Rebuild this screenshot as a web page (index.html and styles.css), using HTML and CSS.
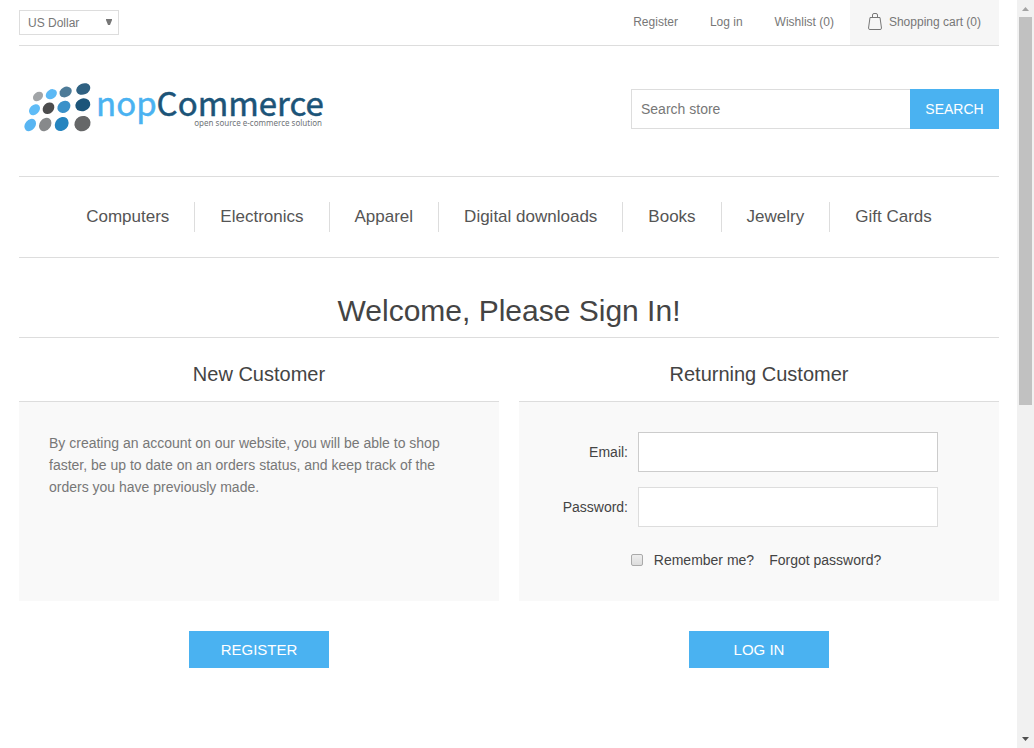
FILE: index.html
```html
<!DOCTYPE html>
<html lang="en">
<head>
<meta charset="utf-8">
<meta name="viewport" content="width=device-width, initial-scale=1">
<title>nopCommerce - Login</title>
<link rel="stylesheet" href="styles.css">
</head>
<body>
<div class="page">
  <header>
    <div class="header-upper">
      <div class="currency">
        <select class="currency-select" aria-label="Currency"><option>US Dollar</option><option>Euro</option></select>
        <svg class="currency-arrow" width="6" height="6" viewBox="0 0 6 6" aria-hidden="true"><path d="M0 0H6V1L4 6H2L0 1Z" fill="#777"/></svg>
      </div>
      <nav class="header-links" aria-label="Account">
        <a href="#">Register</a>
        <a href="#">Log in</a>
        <a href="#">Wishlist (0)</a>
        <a href="#" class="cart-link">
          <svg width="14" height="17" viewBox="0 0 14 17" fill="none" stroke="#777" aria-hidden="true"><path d="M2 4.500H12L13.500 15.200Q13.500 16.500 12 16.500H2Q.5 16.500.5 15.200Z"/><path d="M4.500 4V2Q4.500.5 6 .5H8Q9.500.5 9.500 2V4"/></svg>
          <span>Shopping cart (0)</span>
        </a>
      </nav>
    </div>
    <div class="header-lower">
      <a href="#" class="logo" aria-label="nopCommerce, open source e-commerce solution">
        <svg width="310" height="60" viewBox="0 0 310 60">
          <g transform="translate(-19 -78)">
            <ellipse cx="38" cy="96.500" rx="5.500" ry="4.200" transform="rotate(-38 38 96.500)" fill="#a1a4a7"/>
            <ellipse cx="51.300" cy="94.200" rx="6" ry="4.600" transform="rotate(-34 51.300 94.200)" fill="#5cb9f5"/>
            <ellipse cx="65.600" cy="92" rx="6.500" ry="5" transform="rotate(-30 65.600 92)" fill="#4d7b98"/>
            <ellipse cx="83.300" cy="89" rx="7.300" ry="5.500" transform="rotate(-24 83.300 89)" fill="#2f6182"/>
            <ellipse cx="34.500" cy="109.700" rx="6.200" ry="4.700" transform="rotate(-44 34.500 109.700)" fill="#5fbcf7"/>
            <ellipse cx="48.500" cy="108.300" rx="6.400" ry="5.200" transform="rotate(-44 48.500 108.300)" fill="#4c4c4d"/>
            <ellipse cx="63.900" cy="106.800" rx="6.900" ry="5.700" transform="rotate(-36 63.900 106.800)" fill="#3a91c9"/>
            <ellipse cx="82.800" cy="104.800" rx="7.600" ry="6.300" transform="rotate(-20 82.800 104.800)" fill="#1c557a"/>
            <ellipse cx="30.200" cy="125" rx="6.800" ry="5.100" transform="rotate(-50 30.200 125)" fill="#58b5f2"/>
            <ellipse cx="45.200" cy="124.500" rx="7.200" ry="5.600" transform="rotate(-52 45.200 124.500)" fill="#87898b"/>
            <ellipse cx="61.700" cy="124" rx="7.600" ry="6.400" transform="rotate(-48 61.700 124)" fill="#2584bf"/>
            <ellipse cx="82.500" cy="123.600" rx="8.300" ry="7.500" transform="rotate(-30 82.500 123.600)" fill="#666768"/>
          </g>
          <text class="logo-name" x="77" y="38"><tspan class="logo-nop">nop</tspan><tspan class="logo-commerce">Commerce</tspan></text>
          <text class="logo-tagline" x="303" y="48" text-anchor="end">open source e-commerce solution</text>
        </svg>
      </a>
      <form class="search">
        <input class="search-input" type="text" placeholder="Search store" aria-label="Search store">
        <button class="search-button" type="button">SEARCH</button>
      </form>
    </div>
    <nav class="menu" aria-label="Categories">
      <a href="#">Computers</a>
      <a href="#">Electronics</a>
      <a href="#">Apparel</a>
      <a href="#">Digital downloads</a>
      <a href="#">Books</a>
      <a href="#">Jewelry</a>
      <a href="#">Gift Cards</a>
    </nav>
  </header>
  <main>
    <h1>Welcome, Please Sign In!</h1>
    <div class="columns">
      <section class="column">
        <h2>New Customer</h2>
        <div class="panel">
          <p>By creating an account on our website, you will be able to shop faster, be up to date on an orders status, and keep track of the orders you have previously made.</p>
        </div>
        <button class="action" type="button">REGISTER</button>
      </section>
      <section class="column">
        <h2>Returning Customer</h2>
        <form class="panel" id="login">
          <div class="field">
            <label for="email">Email:</label>
            <input class="email" type="email" id="email">
          </div>
          <div class="field">
            <label for="password">Password:</label>
            <input type="password" id="password">
          </div>
          <div class="options">
            <input type="checkbox" id="remember">
            <label for="remember">Remember me?</label>
            <a href="#">Forgot password?</a>
          </div>
        </form>
        <button class="action" type="button">LOG IN</button>
      </section>
    </div>
  </main>
</div>
<div class="scrollbar" aria-hidden="true">
  <svg width="17" height="17" viewBox="0 0 17 17"><path d="M5 11H12L8.500 7Z" fill="#a3a3a3"/></svg>
  <div class="track"><div class="thumb"></div></div>
  <svg width="17" height="17" viewBox="0 0 17 17"><path d="M5 6H12L8.500 10Z" fill="#505050"/></svg>
</div>
</body>
</html>
```
FILE: styles.css
```css
* { box-sizing: border-box; }
body {
  margin: 0;
  display: flex;
  min-height: 100vh;
  font: 14px "Liberation Sans", Arial, sans-serif;
  color: #777;
  background: #fff;
}
a { color: inherit; text-decoration: none; }
button, input, select { font: inherit; border-radius: 0; }
.page { flex: 1; min-width: 0; padding: 0 18px 0 19px; }

.header-upper {
  display: flex;
  justify-content: space-between;
  align-items: center;
  border-bottom: 1px solid #ddd;
  font-size: 12px;
}
.currency { position: relative; }
.currency-select {
  appearance: none;
  display: block;
  width: 100px;
  height: 25px;
  padding: 0 8px;
  border: 1px solid #ddd;
  background: #fff;
  color: #777;
}
.currency-arrow { position: absolute; right: 7px; top: 9px; pointer-events: none; }
.header-links { display: flex; line-height: 45px; }
.header-links a { padding: 0 16px; }
.header-links .cart-link {
  display: flex;
  align-items: center;
  gap: 7px;
  padding: 0 18px;
  background: #f6f6f6;
}
.cart-link span { height: 45px; }
.cart-link svg { margin-bottom: 2px; }

.header-lower {
  display: flex;
  justify-content: space-between;
  align-items: center;
  padding: 32px 0 38px;
  border-bottom: 1px solid #ddd;
}
.logo svg { display: block; overflow: visible; }
.logo-name { font-family: "Noto Sans CJK SC", sans-serif; font-size: 33px; stroke-width: 0.5px; }
.logo-nop { fill: #4ab2f1; stroke: #4ab2f1; }
.logo-commerce { fill: #1c5478; stroke: #1c5478; }
.logo-tagline { font-family: "Noto Sans", sans-serif; font-size: 8px; fill: #6f7478; }
.search { display: flex; height: 40px; margin-top: 2px; }
.search-input {
  width: 279px;
  padding: 0 9px;
  border: 1px solid #ddd;
  border-right: 0;
  color: #777;
}
.search-input::placeholder { color: #777; opacity: 1; }
.search-button { width: 89px; padding: 0; border: 0; background: #4ab2f1; color: #fff; }

.menu {
  display: flex;
  justify-content: center;
  padding: 25px 0;
  border-bottom: 1px solid #ddd;
  font-size: 17px;
  line-height: 30px;
  color: #555;
}
.menu a { padding: 0 25px; }
.menu a + a { border-left: 1px solid #ddd; }

h1, h2 { margin: 0; font-weight: normal; text-align: center; color: #444; }
h1 { padding: 32px 0 6px; border-bottom: 1px solid #ddd; font-size: 30px; line-height: 41px; }
.columns { display: grid; grid-template-columns: 1fr 1fr; gap: 20px; }
.column { display: grid; grid-template-rows: auto 1fr auto; }
h2 { padding: 21px 0 12px; font-size: 20px; line-height: 30px; }
.panel {
  padding: 30px;
  border-top: 1px solid #ddd;
  background: #f9f9f9;
  line-height: 22px;
}
.panel p { margin: 0; max-width: 400px; }
.action {
  justify-self: center;
  width: 140px;
  height: 37px;
  margin: 30px 0;
  border: 0;
  background: #4ab2f1;
  color: #fff;
  font-size: 15px;
}
.field {
  display: flex;
  justify-content: flex-end;
  align-items: center;
  gap: 10px;
  margin-bottom: 15px;
  padding-right: 31px;
  color: #444;
}
.field input { width: 300px; height: 40px; padding: 0 8px; border: 1px solid #ddd; background: #fff; }
.field .email { border-color: #ccc; }
.options { display: flex; justify-content: center; align-items: center; padding: 7px 6px 0 0; color: #444; }
.options input {
  appearance: none;
  width: 12px;
  height: 12px;
  margin: 0 11px 0 0;
  border: 1px solid #aaa;
  border-radius: 2px;
  background: linear-gradient(#eee, #ddd);
}
.options a { margin-left: 15px; }

.scrollbar {
  position: sticky;
  top: 0;
  display: flex;
  flex-direction: column;
  width: 17px;
  height: 100vh;
  background: #f1f1f1;
}
.scrollbar svg { display: block; }
.track { flex: 1; padding: 0 2px; }
.thumb { height: 54.3%; background: #c1c1c1; }
```
